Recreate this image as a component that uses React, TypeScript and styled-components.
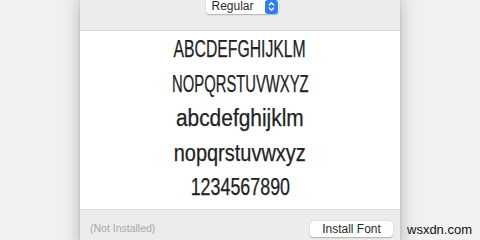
import React from "react";
import styled, { createGlobalStyle } from "styled-components";

const Global = createGlobalStyle`
  html, body { margin: 0; padding: 0; }
  body { width: 480px; height: 240px; overflow: hidden; background: #f1f1f1; font-family: "Liberation Sans", Arial, sans-serif; }
`;

const Page = styled.div`
  width: 480px;
  height: 240px;
  display: flex;
  overflow: hidden;
  background: #f1f1f1;
`;

const Window = styled.div`
  margin-left: 80px;
  width: 320px;
  height: 252px;
  display: flex;
  flex-direction: column;
  background: #ececec;
  border-radius: 0 0 10px 10px;
  box-shadow: 0 0 18px rgba(0, 0, 0, 0.28), 0 0 2px rgba(0, 0, 0, 0.15);
  overflow: hidden;
`;

const Toolbar = styled.div`
  height: 30px;
  flex: none;
  display: flex;
  justify-content: center;
  align-items: flex-start;
  border-bottom: 1px solid #d6d6d6;
  background: #ececec;
`;

const Popup = styled.div`
  margin-top: -2px;
  margin-left: 4px;
  width: 73px;
  height: 16px;
  box-sizing: border-box;
  background: #fff;
  border-radius: 4px;
  box-shadow: 0 0.5px 1.5px rgba(0, 0, 0, 0.25);
  display: flex;
  align-items: center;
  justify-content: space-between;
  padding: 0 1px 0 6px;
  font-size: 12px;
  color: #2a2a2a;
`;

const Stepper = styled.div`
  width: 13px;
  height: 14px;
  margin-top: 1px;
  border-radius: 3px;
  background: #2e7cf6;
  display: flex;
  align-items: center;
  justify-content: center;
`;

const Preview = styled.div`
  height: 179px;
  flex: none;
  background: #fff;
  border-bottom: 1px solid #dcdcdc;
  display: flex;
  flex-direction: column;
  align-items: center;
  padding-top: 1px;
  box-sizing: border-box;
`;

const Sample = styled.div<{ sx: number }>`
  height: 34.5px;
  line-height: 34.5px;
  font-family: "Liberation Sans Narrow", "Liberation Sans", sans-serif;
  font-size: 23.5px;
  color: #222;
  white-space: nowrap;
  -webkit-text-stroke: 0.25px #222;
  transform: scaleX(${(p) => p.sx});
`;

const Footer = styled.div`
  height: 30px;
  flex: none;
  display: flex;
  align-items: center;
  justify-content: space-between;
  padding: 0 7px 0 10px;
  box-sizing: border-box;
`;

const Status = styled.span`
  font-size: 10.5px;
  color: #a8a8a8;
  margin-top: 5px;
`;

const Button = styled.div`
  width: 83px;
  height: 16px;
  margin-top: 7px;
  background: #fff;
  border-radius: 4px;
  box-shadow: 0 0.5px 1.5px rgba(0, 0, 0, 0.25);
  display: flex;
  align-items: center;
  justify-content: center;
  font-size: 12px;
  color: #2a2a2a;
`;

const Side = styled.div`
  flex: 1;
  display: flex;
  align-items: flex-end;
  padding: 0 0 3px 7px;
  font-size: 13px;
  color: #111;
`;

export default function App() {
  return (
    <>
      <Global />
      <Page>
        <Window>
          <Toolbar>
            <Popup>
              <span>Regular</span>
              <Stepper>
                <svg width="7" height="11" viewBox="0 0 7 11">
                  <path d="M1.3 4 L3.5 1.8 L5.7 4 M1.3 7 L3.5 9.2 L5.7 7" fill="none" stroke="#fff" strokeWidth="1.3" strokeLinecap="round" strokeLinejoin="round" />
                </svg>
              </Stepper>
            </Popup>
          </Toolbar>
          <Preview>
            <Sample sx={0.67}>ABCDEFGHIJKLM</Sample>
            <Sample sx={0.63}>NOPQRSTUVWXYZ</Sample>
            <Sample sx={0.89}>abcdefghijklm</Sample>
            <Sample sx={0.85}>nopqrstuvwxyz</Sample>
            <Sample sx={0.76}>1234567890</Sample>
          </Preview>
          <Footer>
            <Status>(Not Installed)</Status>
            <Button>Install Font</Button>
          </Footer>
        </Window>
        <Side>wsxdn.com</Side>
      </Page>
    </>
  );
}
